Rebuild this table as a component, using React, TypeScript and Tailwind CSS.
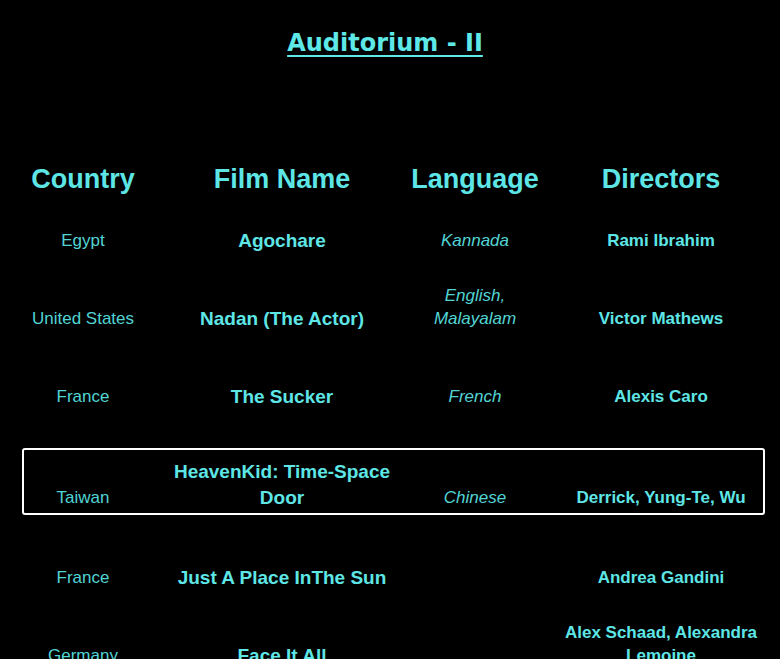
import React from "react";

type Row = {
  country: string;
  film: string;
  language: string;
  directors: string;
  h: string;
};

const rows: Row[] = [
  { country: "Egypt", film: "Agochare", language: "Kannada", directors: "Rami Ibrahim", h: "h-[57px]" },
  { country: "United States", film: "Nadan (The Actor)", language: "English, Malayalam", directors: "Victor Mathews", h: "h-[78px]" },
  { country: "France", film: "The Sucker", language: "French", directors: "Alexis Caro", h: "h-[78px]" },
];

const rowsAfter: Row[] = [
  { country: "France", film: "Just A Place InThe Sun", language: "", directors: "Andrea Gandini", h: "h-[74px]" },
  { country: "Germany", film: "Face It All", language: "", directors: "Alex Schaad, Alexandra Lemoine", h: "h-[78px]" },
];

const grid = "grid grid-cols-[166px_232px_154px_218px] items-end";
const sans = "font-['Liberation_Sans',Arial,sans-serif]";

function Cells({ r }: { r: Row }) {
  return (
    <>
      <div className="px-1 text-center text-[17px] leading-[23px] text-[#52d4d4]">{r.country}</div>
      <div className="px-1 -mb-[2px] text-center text-[19px] leading-[26px] font-bold text-[#5ee6e6]">{r.film}</div>
      <div className="px-[10px] text-center text-[17px] leading-[23px] italic text-[#52d4d4]">{r.language}</div>
      <div className="px-1 text-center text-[17px] leading-[23px] font-bold text-[#5ee6e6]">{r.directors}</div>
    </>
  );
}

export default function App() {
  return (
    <div className={`w-[780px] h-[659px] overflow-hidden bg-black ${sans}`}>
      <div className="w-[770px] flex flex-col">
        <h1 className="mt-[29px] text-center font-['DejaVu_Sans',Verdana,sans-serif] text-[24px] leading-[28px] font-bold text-[#5ee8e8] underline decoration-2 underline-offset-[4px]">
          Auditorium - II
        </h1>

        <div className={`${grid} mt-[106px] h-[32px]`}>
          {["Country", "Film Name", "Language", "Directors"].map((t) => (
            <div key={t} className="text-center text-[27px] leading-[32px] font-bold text-[#5ee6e6]">
              {t}
            </div>
          ))}
        </div>

        {rows.map((r, i) => (
          <div key={i} className={`${grid} ${r.h}`}>
            <Cells r={r} />
          </div>
        ))}

        <div className="mt-[40px] ml-[22px] w-[743px] border-2 border-white rounded-[3px] pt-[7px] pb-[4px]">
          <div className={`${grid} h-[52px] -ml-[24px]`}>
            <Cells
              r={{
                country: "Taiwan",
                film: "HeavenKid: Time-Space Door",
                language: "Chinese",
                directors: "Derrick, Yung-Te, Wu",
                h: "",
              }}
            />
          </div>
        </div>

        {rowsAfter.map((r, i) => (
          <div key={i} className={`${grid} ${r.h}`}>
            <Cells r={r} />
          </div>
        ))}
      </div>
    </div>
  );
}
